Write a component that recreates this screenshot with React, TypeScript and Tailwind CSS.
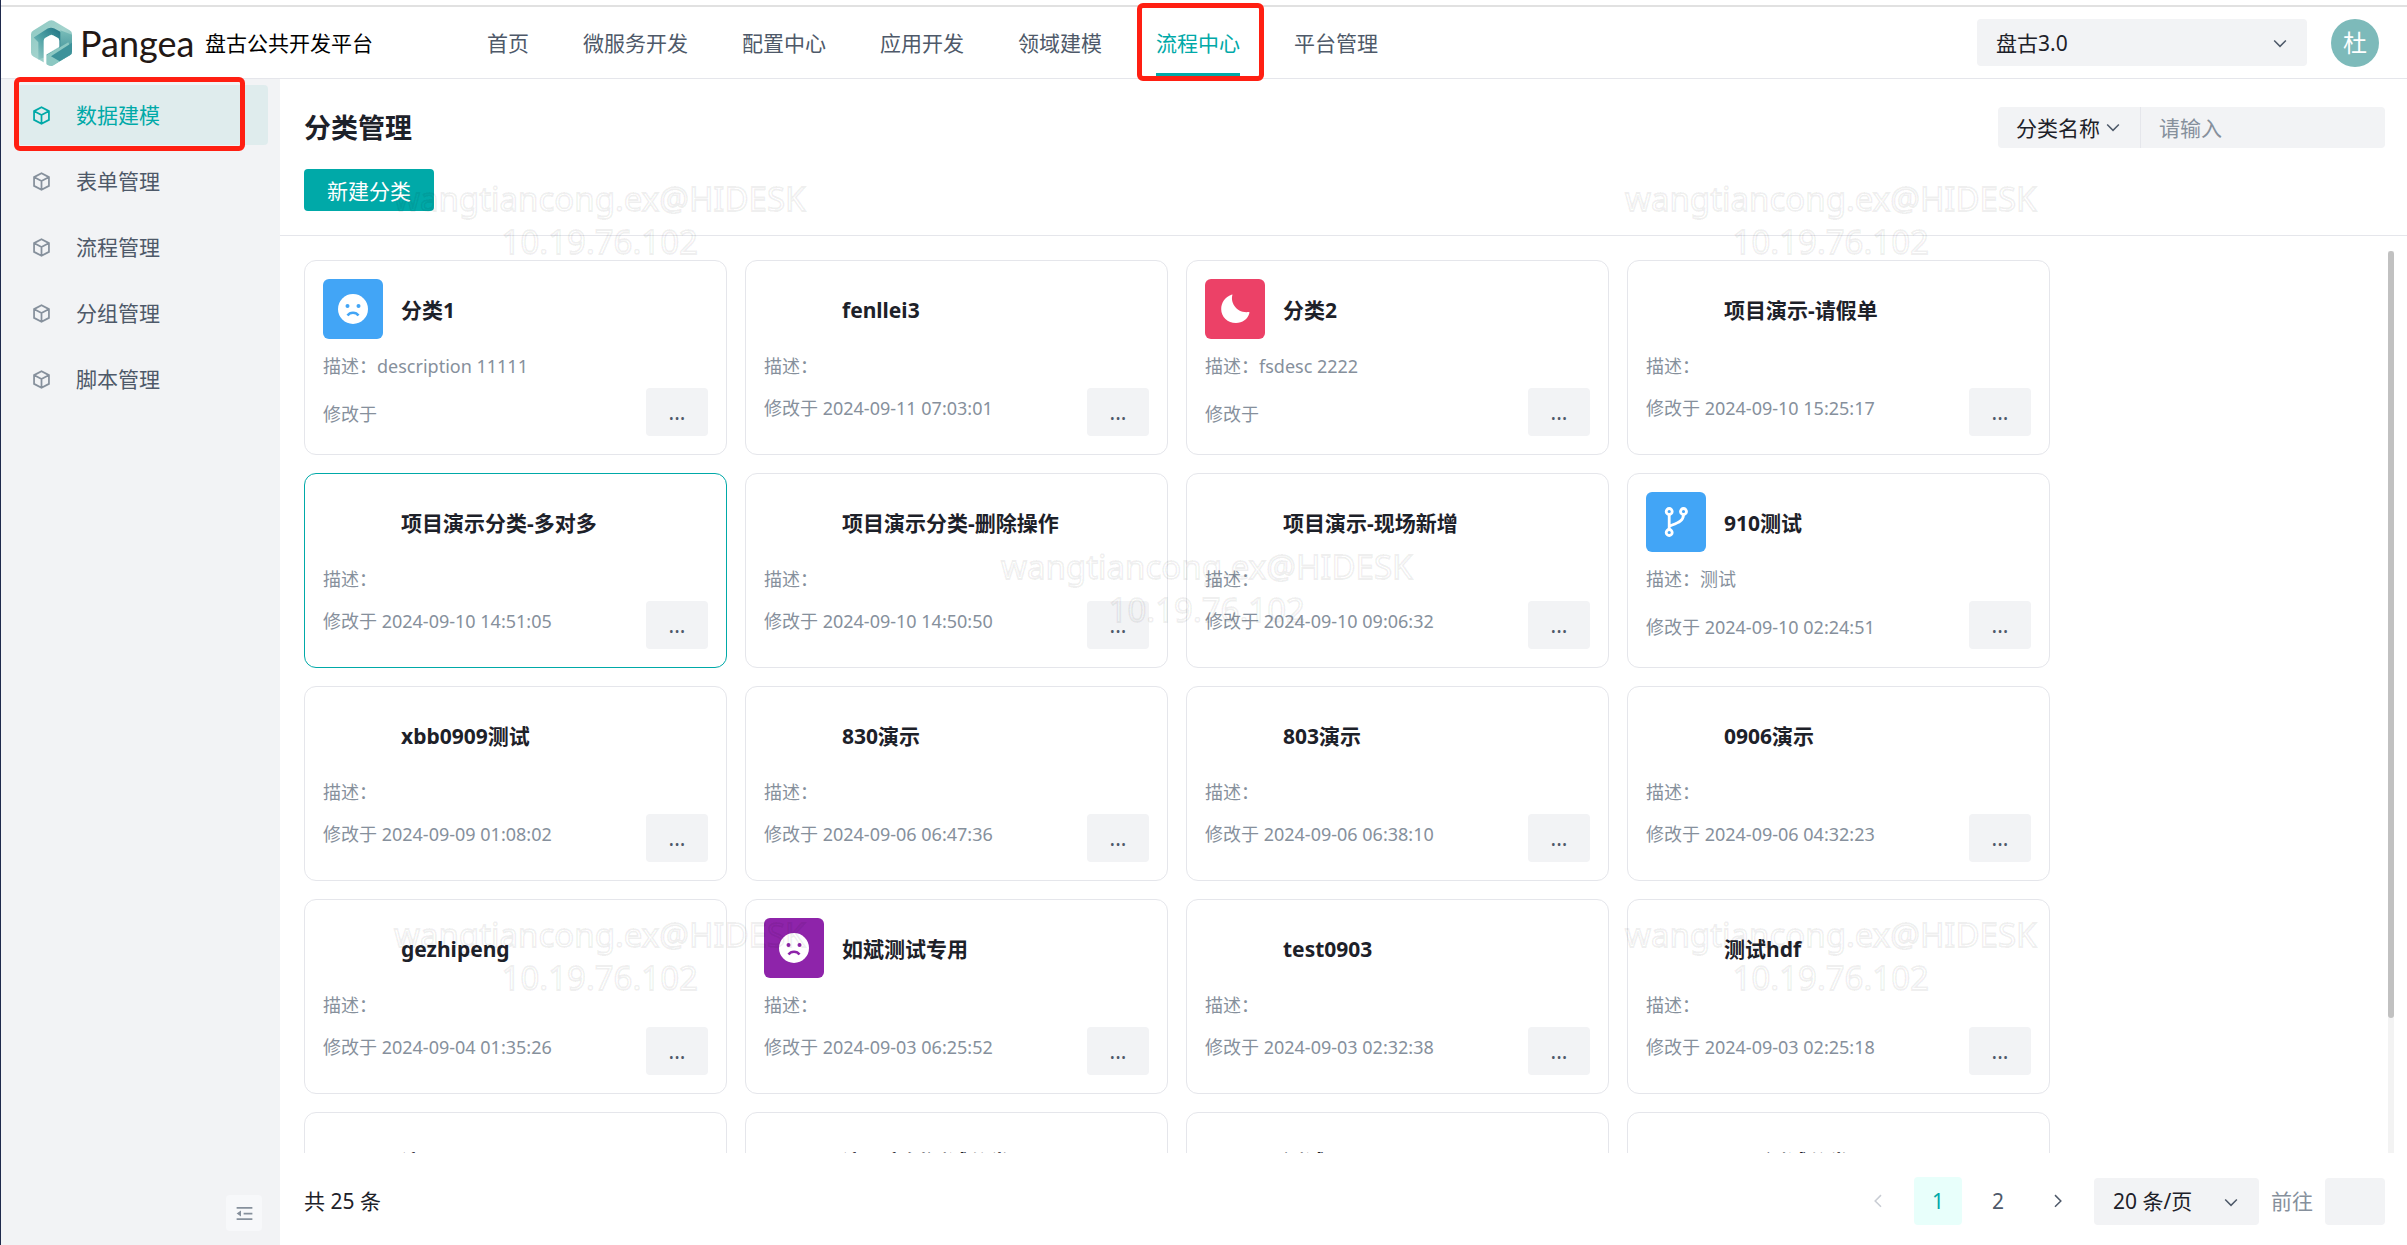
import { useState } from "react";
import type { ReactNode } from "react";

type Category = {
  title: string;
  desc?: string;
  time: string;
  icon?: "sad" | "moon" | "branch";
  iconBg?: string;
  active?: boolean;
};

const navItems = [
  "首页",
  "微服务开发",
  "配置中心",
  "应用开发",
  "领域建模",
  "流程中心",
  "平台管理",
];

const menuItems = ["数据建模", "表单管理", "流程管理", "分组管理", "脚本管理"];

const categories: Category[] = [
  {
    title: "分类1",
    desc: "description 11111",
    time: "",
    icon: "sad",
    iconBg: "bg-[#42a5f6]",
  },
  { title: "fenllei3", time: "2024-09-11 07:03:01" },
  {
    title: "分类2",
    desc: "fsdesc 2222",
    time: "",
    icon: "moon",
    iconBg: "bg-[#ec4167]",
  },
  { title: "项目演示-请假单", time: "2024-09-10 15:25:17" },
  { title: "项目演示分类-多对多", time: "2024-09-10 14:51:05", active: true },
  { title: "项目演示分类-删除操作", time: "2024-09-10 14:50:50" },
  { title: "项目演示-现场新增", time: "2024-09-10 09:06:32" },
  {
    title: "910测试",
    desc: "测试",
    time: "2024-09-10 02:24:51",
    icon: "branch",
    iconBg: "bg-[#42a5f6]",
  },
  { title: "xbb0909测试", time: "2024-09-09 01:08:02" },
  { title: "830演示", time: "2024-09-06 06:47:36" },
  { title: "803演示", time: "2024-09-06 06:38:10" },
  { title: "0906演示", time: "2024-09-06 04:32:23" },
  { title: "gezhipeng", time: "2024-09-04 01:35:26" },
  {
    title: "如斌测试专用",
    time: "2024-09-03 06:25:52",
    icon: "sad",
    iconBg: "bg-[#8e24aa]",
  },
  { title: "test0903", time: "2024-09-03 02:32:38" },
  { title: "测试hdf", time: "2024-09-03 02:25:18" },
  { title: "演示", time: "" },
  { title: "演示实例测试分类", time: "" },
  { title: "测试", time: "" },
  { title: "test测试分类", time: "" },
];

// viewBox 48 line icon
const LineIcon = ({ d, size }: { d: string; size: number }) => (
  <svg
    width={size}
    height={size}
    viewBox="0 0 48 48"
    fill="none"
    stroke="currentColor"
    strokeWidth="4"
    aria-hidden="true"
  >
    <path d={d} />
  </svg>
);

const CUBE =
  "M24 23 7.652 14.345M24 23l16.366-8.664M24 23v19.438M7 14v20l17 9 17-9V14L24 5 7 14Z";
const DOWN = "M39.6 17.443 24.043 33 8.487 17.443";
const LEFT = "M32 8.4 16.444 23.956 32 39.513";
const RIGHT = "m16 39.513 15.556-15.557L16 8.4";

const CategoryIcon = ({ name }: { name: Category["icon"] }) => {
  if (name === "moon") {
    return (
      <svg width="30" height="30" viewBox="0 0 30 30" aria-hidden="true">
        <path
          d="M12.4 1C10.2 8 16 19.4 28.6 18.1c.6-.1 1 .4.8.9C27.8 25.200 22.300 29 16 29 7.600 29 1.200 22.800 1.200 15.200 1.200 8.500 5.200 3 11.500.7c.6-.2 1.100-.2.900.3Z"
          fill="#fff"
        />
      </svg>
    );
  }
  if (name === "branch") {
    return (
      <svg
        width="30"
        height="30"
        viewBox="0 0 30 30"
        fill="none"
        stroke="#fff"
        strokeWidth="2.800"
        aria-hidden="true"
      >
        <circle cx="8.200" cy="4.500" r="3" />
        <circle cx="22.500" cy="4.500" r="3" />
        <circle cx="8.200" cy="25.500" r="3" />
        <path d="M8.200 7.500v15M22.500 7.500c0 7-6.500 8.500-14.300 11.700" />
      </svg>
    );
  }
  return (
    <svg width="30" height="30" viewBox="0 0 30 30" aria-hidden="true">
      <circle cx="15" cy="15" r="15" fill="#fff" />
      <g className="fill-current">
        <circle cx="9.500" cy="12" r="2" />
        <circle cx="20.500" cy="12" r="2" />
      </g>
      <path
        d="M9.500 21.500c2.600-3.800 8.400-3.800 11 0"
        className="stroke-current"
        fill="none"
        strokeWidth="2.500"
      />
    </svg>
  );
};

const Logo = () => (
  <svg width="41" height="46" viewBox="0 0 123 137" aria-hidden="true">
    <defs>
      <linearGradient id="base" x1="0" y1="0" x2="1" y2="1">
        <stop offset="0" stopColor="#8cc8c2" />
        <stop offset="0.500" stopColor="#a3d3cd" />
        <stop offset="1" stopColor="#6db3b2" />
      </linearGradient>
      <linearGradient id="inner" x1="0" y1="1" x2="1" y2="0">
        <stop offset="0" stopColor="#9ccfca" />
        <stop offset="0.500" stopColor="#4b9fa3" />
        <stop offset="1" stopColor="#1d6f80" />
      </linearGradient>
      <linearGradient id="side" x1="0" y1="0" x2="0" y2="1">
        <stop offset="0" stopColor="#79bdb9" />
        <stop offset="1" stopColor="#2a7f8c" />
      </linearGradient>
    </defs>
    <path
      d="M54 2q7-4 14 0l48 28q7 4 7 11v52q0 7-7 11l-48 30q-7 5-14 1L7 109q-7-4-7-11V42q0-7 7-11Z"
      fill="url(#base)"
    />
    <path
      d="M8 52 50 25q10-5 20 0l18 10q8 5 8 14v40L84 84V55L61 43 40 54v58L22 118V66Z"
      fill="url(#inner)"
    />
    <path d="M88 30 123 44v52q0 6-6 9L62 136 46 104l42-22Z" fill="url(#side)" />
    <path d="M46 105 112 66l11 28q0 7-7 11l-48 30q-10 5-22-3Z" fill="#8cc8c2" />
    <path d="m60 108 63-40v26q0 7-7 11l-30 18Z" fill="#3d929a" />
    <path
      d="M38 134V62q0-6 6-9l12-7q5-3 11 0l12 7q6 3 6 9v18L46 103v32Z"
      fill="#fff"
    />
  </svg>
);

// Red frame drawn over the highlighted entry
const Mark = ({ className }: { className: string }) => (
  <span
    className={`pointer-events-none absolute z-10 rounded-md border-[5px] border-[#ff1f12] ${className}`}
  />
);

const Header = () => {
  const [current, setCurrent] = useState("流程中心");
  return (
    <header className="flex h-[72px] shrink-0 items-center border-b border-[#e5e6eb] pl-[30px] pr-7">
      <div className="flex w-[456px] shrink-0 items-center">
        <Logo />
        <span className="ml-2 w-[125px] font-['Lato',sans-serif] text-4xl leading-10 text-[#231815]">
          Pangea
        </span>
        <span className="text-black">盘古公共开发平台</span>
      </div>
      <nav className="flex h-full gap-[54px]">
        {navItems.map((item) => (
          <a
            key={item}
            href="#"
            onClick={() => setCurrent(item)}
            className={`relative flex items-center whitespace-nowrap ${
              current === item ? "text-[#00a9a8]" : "text-[#4e5969]"
            }`}
          >
            {item}
            {current === item && (
              <span className="absolute inset-x-0 bottom-0 h-[5px] bg-[#00a9a8]" />
            )}
            {item === "流程中心" && (
              <Mark className="-left-[19px] -top-1 h-[78px] w-[127px]" />
            )}
          </a>
        ))}
      </nav>
      <div className="relative ml-auto w-[330px]">
        <select
          aria-label="平台版本"
          className="h-[47px] w-full appearance-none rounded-sm bg-[#f2f3f5] px-[19px] text-[#1d2129]"
        >
          <option>盘古3.0</option>
        </select>
        <span className="pointer-events-none absolute right-[18px] top-[15px] text-[#4e5969]">
          <LineIcon d={DOWN} size={18} />
        </span>
      </div>
      <button className="ml-6 size-12 rounded-full bg-[#7dbaba] text-2xl text-white">
        杜
      </button>
    </header>
  );
};

const Sidebar = () => {
  const [selected, setSelected] = useState("数据建模");
  return (
    <aside className="flex w-[279px] shrink-0 flex-col bg-[#f2f3f5] pb-3.5 pt-1.5">
      <ul className="flex flex-col gap-1.5 pl-3.5 pr-3">
        {menuItems.map((item) => (
          <li key={item} className="relative">
            <button
              onClick={() => setSelected(item)}
              className={`flex h-[60px] w-full items-center gap-6 rounded-sm pl-4 ${
                selected === item
                  ? "bg-[#dfeced] text-[#00a9a8]"
                  : "text-[#4e5969]"
              }`}
            >
              <span className={selected === item ? "" : "text-[#86909c]"}>
                <LineIcon d={CUBE} size={21} />
              </span>
              {item}
            </button>
            {item === "数据建模" && (
              <Mark className="-left-px -top-2 h-[74px] w-[231px]" />
            )}
          </li>
        ))}
      </ul>
      <button
        aria-label="收起菜单"
        className="ml-auto mr-[18px] mt-auto flex size-9 items-center justify-center rounded-sm bg-[#f7f8fa] text-[#86909c]"
      >
        <svg width="21" height="21" viewBox="0 0 48 48" aria-hidden="true">
          <path
            d="M42 11H6M42 24H22M42 37H6"
            stroke="currentColor"
            strokeWidth="4"
          />
          <path d="M16 31 6 24l10-7Z" fill="currentColor" />
        </svg>
      </button>
    </aside>
  );
};

const CategoryCard = ({ item }: { item: Category }) => (
  <article
    className={`h-[195px] rounded-xl border p-[18px] ${
      item.active ? "border-[#00a9a8]" : "border-[#e5e6eb]"
    }`}
  >
    <div className="flex h-[60px] items-center gap-[18px]">
      <div
        className={`flex size-[60px] items-center justify-center rounded-md ${
          item.iconBg ?? ""
        } ${item.iconBg === "bg-[#8e24aa]" ? "text-[#8e24aa]" : "text-[#42a5f6]"}`}
      >
        {item.icon && <CategoryIcon name={item.icon} />}
      </div>
      <h2 className="pt-0.5 font-bold text-[#1d2129]">{item.title}</h2>
    </div>
    <div className="flex justify-between text-lg leading-6 text-[#86909c]">
      <div>
        <p className="mt-[15px]">描述：{item.desc}</p>
        <p className={item.desc ? "mt-6" : "mt-[18px]"}>修改于 {item.time}</p>
      </div>
      <button
        aria-label="更多操作"
        className="mt-[49px] h-12 w-[62px] rounded-sm bg-[#f2f3f5] text-[21px] text-[#4e5969]"
      >
        ...
      </button>
    </div>
  </article>
);

const Toolbar = () => (
  <div className="flex items-start justify-between border-b border-[#e5e6eb] pb-6 pl-6 pr-[22px] pt-7">
    <div className="flex flex-col items-start">
      <h1 className="text-[27px] font-bold leading-[42px] text-[#1d2129]">
        分类管理
      </h1>
      <button className="mt-5 h-[42px] rounded-sm bg-[#00a9a8] px-[23px] pt-0.5 text-white">
        新建分类
      </button>
    </div>
    <div className="flex h-[41px] w-[387px] rounded-sm bg-[#f2f3f5]">
      <div className="relative w-[143px] shrink-0 border-r border-[#e5e6eb]">
        <select
          aria-label="查询字段"
          className="h-full w-full appearance-none pl-[18px] text-[#1d2129]"
        >
          <option>分类名称</option>
        </select>
        <span className="pointer-events-none absolute right-[18px] top-[11px] text-[#4e5969]">
          <LineIcon d={DOWN} size={18} />
        </span>
      </div>
      <input
        aria-label="查询内容"
        placeholder="请输入"
        className="min-w-0 flex-1 px-[18px] outline-none placeholder:text-[#86909c]"
      />
    </div>
  </div>
);

const PageButton = ({
  children,
  label,
  className,
}: {
  children: ReactNode;
  label: string;
  className: string;
}) => (
  <button
    aria-label={label}
    className={`flex size-12 items-center justify-center rounded-sm ${className}`}
  >
    {children}
  </button>
);

const Pagination = () => (
  <footer className="flex items-center gap-3 pb-5 pl-6 pr-[22px] pt-6">
    <p className="mr-auto text-[#1d2129]">共 25 条</p>
    <PageButton label="上一页" className="text-[#c9cdd4]">
      <LineIcon d={LEFT} size={18} />
    </PageButton>
    <PageButton label="第1页" className="bg-[#e8fffb] text-[#00a9a8]">
      1
    </PageButton>
    <PageButton label="第2页" className="text-[#4e5969]">
      2
    </PageButton>
    <PageButton label="下一页" className="text-[#4e5969]">
      <LineIcon d={RIGHT} size={18} />
    </PageButton>
    <div className="relative w-[165px]">
      <select
        aria-label="每页条数"
        className="h-[47px] w-full appearance-none rounded-sm bg-[#f2f3f5] pl-[19px] text-[#1d2129]"
      >
        <option>20 条/页</option>
      </select>
      <span className="pointer-events-none absolute right-[19px] top-[15px] text-[#4e5969]">
        <LineIcon d={DOWN} size={18} />
      </span>
    </div>
    <label htmlFor="jump" className="text-[#86909c]">
      前往
    </label>
    <input
      id="jump"
      className="h-[47px] w-[60px] rounded-sm bg-[#f2f3f5] px-2 text-center outline-none"
    />
  </footer>
);

const Watermark = ({ className }: { className: string }) => (
  <div
    className={`absolute text-center font-['Noto_Sans',sans-serif] text-[33px] leading-[43px] text-transparent [-webkit-text-stroke:2px_rgba(0,0,0,0.06)] ${className}`}
  >
    <p>wangtiancong.ex@HIDESK</p>
    <p>10.19.76.102</p>
  </div>
);

export default function App() {
  return (
    <div className="relative flex h-screen flex-col overflow-hidden border-l border-[#1f2a4d] bg-white font-['Noto_Sans','Noto_Sans_CJK_SC',sans-serif] text-[21px] leading-8">
      <div className="h-[7px] shrink-0 border-b-2 border-[#e1e1e1]" />
      <Header />
      <div className="flex min-h-0 flex-1">
        <Sidebar />
        <main className="flex min-w-0 flex-1 flex-col">
          <Toolbar />
          <div className="mt-[15px] flex min-h-0 flex-1 overflow-hidden pl-6 pr-[13px]">
            <div className="grid h-full flex-1 grid-cols-[repeat(auto-fill,423px)] content-start gap-[18px] overflow-hidden pt-[9px]">
              {categories.map((item) => (
                <CategoryCard key={item.title} item={item} />
              ))}
            </div>
            <div className="w-1.5 bg-[#f3f3f3]">
              <div className="h-[85%] rounded-full bg-[#c1c1c1]" />
            </div>
          </div>
          <Pagination />
        </main>
      </div>
      <div aria-hidden="true" className="pointer-events-none absolute inset-0">
        <Watermark className="left-[393px] top-[177px]" />
        <Watermark className="left-[1624px] top-[177px]" />
        <Watermark className="left-[1000px] top-[545px]" />
        <Watermark className="left-[393px] top-[913px]" />
        <Watermark className="left-[1624px] top-[913px]" />
      </div>
    </div>
  );
}
